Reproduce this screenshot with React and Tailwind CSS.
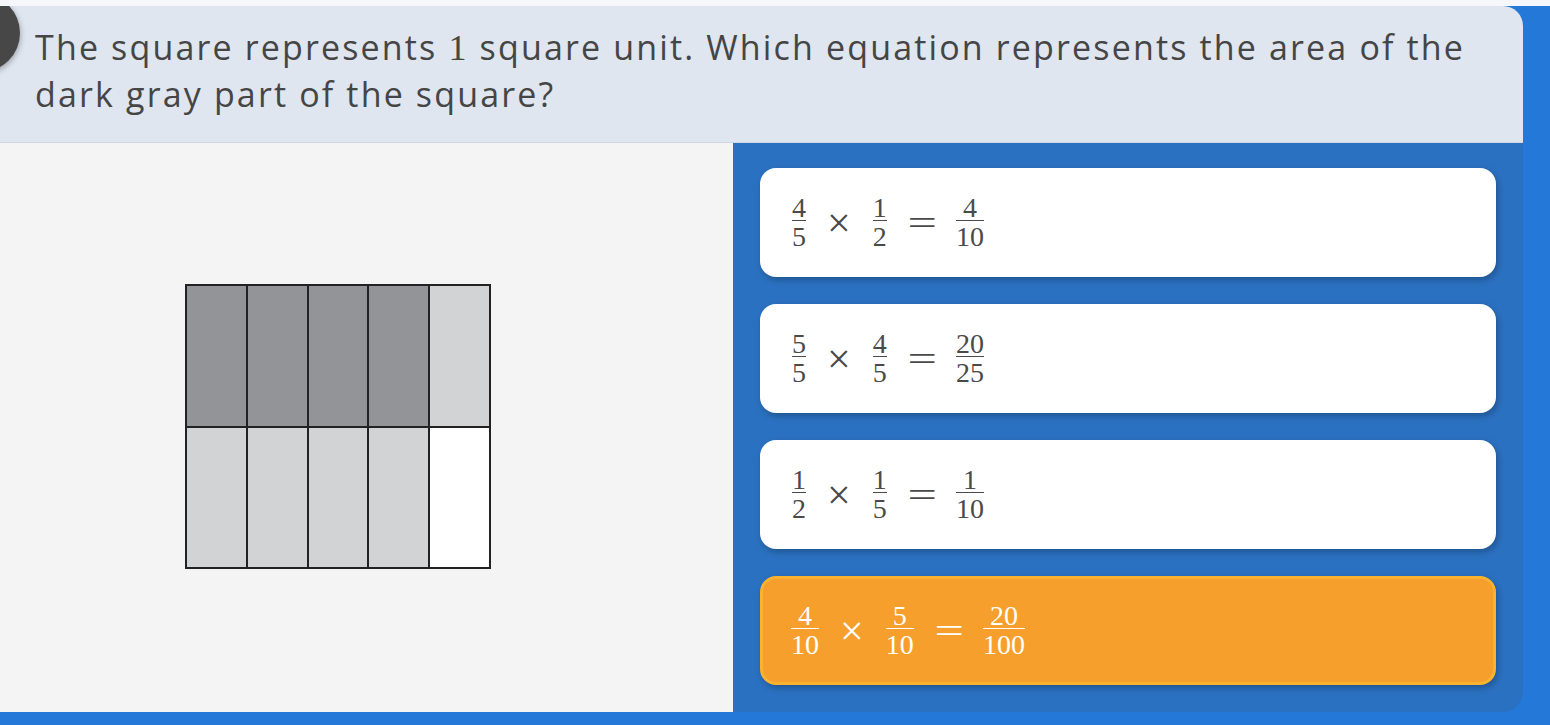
import React from 'react';

const serif = { fontFamily: '"Liberation Serif", "Times New Roman", serif' };

function Frac({ n, d, light }) {
  return (
    <span className="inline-flex flex-col items-center leading-none px-[5px] pt-[2px]">
      <span className="text-[28px] leading-[24px]">{n}</span>
      <span className={`h-[1.5px] w-full ${light ? 'bg-white' : 'bg-[#4a4a4a]'}`} />
      <span className="text-[28px] leading-[28px] pt-[2px]">{d}</span>
    </span>
  );
}

function Equation({ a, b, c, light }) {
  return (
    <div className={`flex items-center ${light ? 'text-white' : 'text-[#4a4a4a]'}`} style={serif}>
      <Frac n={a[0]} d={a[1]} light={light} />
      <span className="inline-block text-[42px] font-light leading-none ml-[16px] mr-[17px]">×</span>
      <Frac n={b[0]} d={b[1]} light={light} />
      <span className="inline-block text-[36px] leading-none ml-[20px] mr-[19px] scale-x-[1.45]">=</span>
      <Frac n={c[0]} d={c[1]} light={light} />
    </div>
  );
}

const choices = [
  { a: ['4', '5'], b: ['1', '2'], c: ['4', '10'] },
  { a: ['5', '5'], b: ['4', '5'], c: ['20', '25'] },
  { a: ['1', '2'], b: ['1', '5'], c: ['1', '10'] },
  { a: ['4', '10'], b: ['5', '10'], c: ['20', '100'], selected: true },
];

const cells = ['dark', 'dark', 'dark', 'dark', 'light', 'light', 'light', 'light', 'light', 'white'];
const cellColor = { dark: 'bg-[#939497]', light: 'bg-[#d2d3d5]', white: 'bg-white' };

export default function App() {
  return (
    <div className="w-[1550px] h-[725px] bg-[#2479d8] overflow-hidden">
      <div className="h-[6px] bg-[#f5f7fa]" />
      <div className="relative w-[1523px] h-[706px] rounded-r-[20px] overflow-hidden flex flex-col">
        <div className="relative h-[137px] shrink-0 bg-[#dfe6f0] border-b border-[#cdd6e2] pl-[35px] pt-[18px] pr-[40px]">
          <div className="absolute left-[-58px] top-[-12px] w-[78px] h-[78px] rounded-full bg-[#474747] shadow-[0_2px_6px_rgba(0,0,0,0.35)]" />
          <p
            className="text-[34px] leading-[46px] font-medium tracking-[2.15px] text-[#454545]"
            style={{ fontFamily: '"Open Sans", "Noto Sans", sans-serif' }}
          >
            The square represents <span style={serif} className="text-[36px] font-normal">1</span> square unit. Which equation represents the area of the dark gray part of the square?
          </p>
        </div>
        <div className="flex-1 flex">
          <div className="w-[733px] bg-[#f4f4f4] flex items-center pl-[185px] pb-[2px]">
            <div className="grid grid-cols-5 grid-rows-2 gap-[2px] p-[2px] bg-[#222] w-[306px] h-[285px]">
              {cells.map((c, i) => (
                <div key={i} className={cellColor[c]} />
              ))}
            </div>
          </div>
          <div className="flex-1 bg-[#2b71c1] flex flex-col gap-[27px] px-[27px] pt-[25px]">
            {choices.map((ch, i) => (
              <div
                key={i}
                className={`h-[109px] rounded-[16px] flex items-center shadow-[2px_3px_6px_rgba(0,0,0,0.25)] ${
                  ch.selected ? 'bg-[#f79f2d] border-[3px] border-[#fbb22e] pl-[23px]' : 'bg-white pl-[27px]'
                }`}
              >
                <Equation a={ch.a} b={ch.b} c={ch.c} light={ch.selected} />
              </div>
            ))}
          </div>
        </div>
      </div>
    </div>
  );
}
